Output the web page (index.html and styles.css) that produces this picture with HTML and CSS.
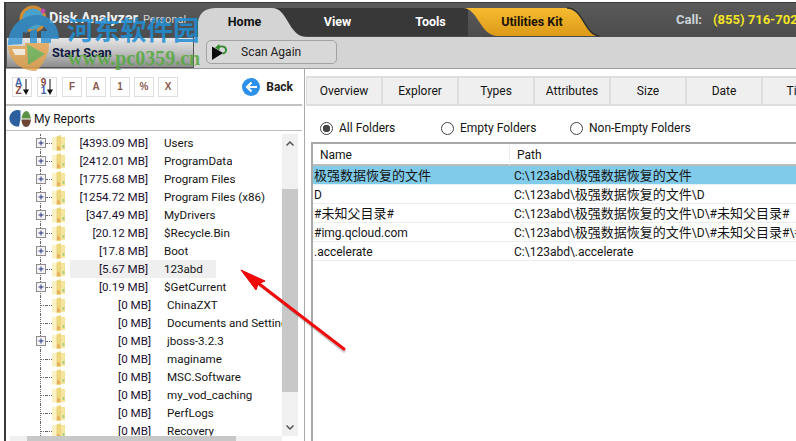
FILE: index.html
```html
<!DOCTYPE html>
<html lang="zh-CN">
<head>
<meta charset="utf-8">
<title>Disk Analyzer</title>
<link rel="stylesheet" href="styles.css">
</head>
<body>
<svg class="defs" width="0" height="0" aria-hidden="true">
  <defs>
    <linearGradient id="gold" x1="0" y1="0" x2="0" y2="1"><stop offset="0" stop-color="#f6bb30"/><stop offset="1" stop-color="#dc9a18"/></linearGradient>
    <symbol id="folder" viewBox="0 0 13 16" preserveAspectRatio="none">
      <path d="M0 2h13v13H0z" fill="#f3e08f"/>
      <path d="M0 2h5v13.500H0z" fill="#faf1c4"/>
      <path d="M4.500 1.500 9 0v16H4.500z" fill="#eed67c"/>
      <path d="M9 2.500h3.500V15H9z" fill="#f5e59e"/>
      <path d="M5 10.500l3 1.500v3H5z" fill="#e6b060"/>
      <path d="M10.500 10h2v3h-2z" fill="#b0cd82"/>
    </symbol>
    <symbol id="plus" viewBox="0 0 10 10">
      <rect x=".5" y=".5" width="9" height="9" fill="#f4f4f6" stroke="#8d8d8d"/>
      <path d="M2.500 5h5M5 2.500v5" stroke="#26337c" stroke-width="1"/>
    </symbol>
  </defs>
</svg>

<div class="window">
  <header class="titlebar">
    <div class="brand"><span class="brand-name">Disk Analyzer</span><span class="brand-edition">Personal</span></div>
    <nav class="tabs">
      <svg class="tabs-bg" width="402" height="34" viewBox="0 0 402 34" aria-hidden="true">
        <path d="M70 5H270V33H70z" fill="#383838"/>
        <path d="M265 5h104c16 0 18 27 32 28H300c-18 0-20-28-35-28z" fill="url(#gold)"/>
        <path d="M369 5c16 0 18 27 32 28" fill="none" stroke="#2e2e2e" stroke-width="1.500"/>
        <path d="M0 34V19Q2 5 18 5h56c16 0 16 28 34 29z" fill="#d4d4d4"/>
      </svg>
      <span class="tab tab-home">Home</span>
      <span class="tab">View</span>
      <span class="tab">Tools</span>
      <span class="tab tab-kit">Utilities Kit</span>
    </nav>
    <div class="call"><span class="call-label">Call:</span><span class="call-number">(855) 716-702</span></div>
  </header>

  <div class="toolbar">
    <button class="start-scan">Start Scan</button>
    <button class="scan-again">
      <svg width="15" height="16" viewBox="0 0 15 16" aria-hidden="true">
        <path d="M0 2.500 11 9 0 16z" fill="#0c0c0c"/>
        <path d="M6 3.500c3-2 8.500-1.500 8 3-.3 2.200-2 3-3.500 3" fill="none" stroke="#2f8a2c" stroke-width="1.800"/>
        <path d="M3 3.500 7.500 0v6.500z" fill="#2f8a2c"/>
      </svg>
      <span>Scan Again</span>
    </button>
  </div>

  <div class="main">
    <aside class="left">
      <div class="sortbar">
        <span class="sort-btn sort-icon"><span class="sort-stack"><b class="blue">A</b><b class="brown">Z</b></span><svg width="6" height="16" viewBox="0 0 6 16" aria-hidden="true"><path d="M3 0v14" stroke="#111"/><path d="M0 10.500h6L3 16z" fill="#111"/></svg></span>
        <span class="sort-btn sort-icon"><span class="sort-stack"><b class="brown">9</b><b class="blue">1</b></span><svg width="6" height="16" viewBox="0 0 6 16" aria-hidden="true"><path d="M3 0v14" stroke="#111"/><path d="M0 10.500h6L3 16z" fill="#111"/></svg></span>
        <span class="sort-btn">F</span>
        <span class="sort-btn">A</span>
        <span class="sort-btn">1</span>
        <span class="sort-btn">%</span>
        <span class="sort-btn">X</span>
        <span class="back">
          <svg width="18" height="18" viewBox="0 0 18 18" aria-hidden="true"><circle cx="9" cy="9" r="9" fill="#2d90ea"/><path d="M15 9H5M9.500 4.500 5 9l4.500 4.500" fill="none" stroke="#fff" stroke-width="2.200"/></svg>
          <b>Back</b>
        </span>
      </div>
      <div class="reports">
        <svg width="22" height="18" viewBox="0 0 22 18" aria-hidden="true">
          <path d="M11.500 .5A8.300 8.300 0 1 0 10 16.500L11.500 9z" fill="#2c5f9e"/>
          <path d="M12.500 8.500C13 4 15 1.500 17 1s4.300 3 4.800 7.500z" fill="#5d9147"/>
          <path d="M12.500 9.500h9.300c0 4-2 7.500-4.700 7.500s-4.600-3.500-4.600-7.500z" fill="#6d4534"/>
        </svg>
        <span>My Reports</span>
      </div>
      <div class="tree-wrap">
        <div class="tree">
          <div class="row"><svg class="plus"><use href="#plus"/></svg><span class="dots"></span><svg class="folder"><use href="#folder"/></svg><span class="size">[4393.09 MB]</span><span class="label">Users</span></div>
          <div class="row"><svg class="plus"><use href="#plus"/></svg><span class="dots"></span><svg class="folder"><use href="#folder"/></svg><span class="size">[2412.01 MB]</span><span class="label">ProgramData</span></div>
          <div class="row"><svg class="plus"><use href="#plus"/></svg><span class="dots"></span><svg class="folder"><use href="#folder"/></svg><span class="size">[1775.68 MB]</span><span class="label">Program Files</span></div>
          <div class="row"><svg class="plus"><use href="#plus"/></svg><span class="dots"></span><svg class="folder"><use href="#folder"/></svg><span class="size">[1254.72 MB]</span><span class="label">Program Files (x86)</span></div>
          <div class="row"><svg class="plus"><use href="#plus"/></svg><span class="dots"></span><svg class="folder"><use href="#folder"/></svg><span class="size">[347.49 MB]</span><span class="label">MyDrivers</span></div>
          <div class="row"><svg class="plus"><use href="#plus"/></svg><span class="dots"></span><svg class="folder"><use href="#folder"/></svg><span class="size">[20.12 MB]</span><span class="label">$Recycle.Bin</span></div>
          <div class="row"><svg class="plus"><use href="#plus"/></svg><span class="dots"></span><svg class="folder"><use href="#folder"/></svg><span class="size">[17.8 MB]</span><span class="label">Boot</span></div>
          <div class="row row-active"><svg class="plus"><use href="#plus"/></svg><span class="dots"></span><svg class="folder"><use href="#folder"/></svg><span class="size">[5.67 MB]</span><span class="label">123abd</span></div>
          <div class="row"><svg class="plus"><use href="#plus"/></svg><span class="dots"></span><svg class="folder"><use href="#folder"/></svg><span class="size">[0.19 MB]</span><span class="label">$GetCurrent</span></div>
          <div class="row row-zero"><span class="noplus"></span><span class="dots"></span><svg class="folder"><use href="#folder"/></svg><span class="size">[0 MB]</span><span class="label">ChinaZXT</span></div>
          <div class="row row-zero"><span class="noplus"></span><span class="dots"></span><svg class="folder"><use href="#folder"/></svg><span class="size">[0 MB]</span><span class="label">Documents and Settings</span></div>
          <div class="row row-zero"><svg class="plus"><use href="#plus"/></svg><span class="dots"></span><svg class="folder"><use href="#folder"/></svg><span class="size">[0 MB]</span><span class="label">jboss-3.2.3</span></div>
          <div class="row row-zero"><span class="noplus"></span><span class="dots"></span><svg class="folder"><use href="#folder"/></svg><span class="size">[0 MB]</span><span class="label">maginame</span></div>
          <div class="row row-zero"><span class="noplus"></span><span class="dots"></span><svg class="folder"><use href="#folder"/></svg><span class="size">[0 MB]</span><span class="label">MSC.Software</span></div>
          <div class="row row-zero"><span class="noplus"></span><span class="dots"></span><svg class="folder"><use href="#folder"/></svg><span class="size">[0 MB]</span><span class="label">my_vod_caching</span></div>
          <div class="row row-zero"><span class="noplus"></span><span class="dots"></span><svg class="folder"><use href="#folder"/></svg><span class="size">[0 MB]</span><span class="label">PerfLogs</span></div>
          <div class="row row-zero"><span class="noplus"></span><span class="dots"></span><svg class="folder"><use href="#folder"/></svg><span class="size">[0 MB]</span><span class="label">Recovery</span></div>
        </div>
        <div class="vscroll">
          <svg class="chev" width="8" height="5" viewBox="0 0 8 5" aria-hidden="true"><path d="M.5 4.500 4 1l3.500 3.500" fill="none" stroke="#555" stroke-width="1.500"/></svg>
          <div class="vthumb"></div>
          <svg class="chev" width="8" height="5" viewBox="0 0 8 5" aria-hidden="true"><path d="M.5.5 4 4 7.500.5" fill="none" stroke="#555" stroke-width="1.500"/></svg>
        </div>
      </div>
      <div class="hscroll"><div class="hthumb"></div></div>
    </aside>

    <section class="right">
      <div class="rtabs">
        <span class="rtab">Overview</span>
        <span class="rtab">Explorer</span>
        <span class="rtab">Types</span>
        <span class="rtab">Attributes</span>
        <span class="rtab">Size</span>
        <span class="rtab">Date</span>
        <span class="rtab">Time</span>
      </div>
      <div class="radios">
        <span class="radio radio-all"><i class="dot dot-on"></i>All Folders</span>
        <span class="radio radio-empty"><i class="dot"></i>Empty Folders</span>
        <span class="radio"><i class="dot"></i>Non-Empty Folders</span>
      </div>
      <div class="table">
        <div class="thead"><span class="th-name">Name</span><span class="th-path">Path</span></div>
        <div class="tr tr-on"><span class="td-name"><span class="cjk">极强数据恢复的文件</span></span><span class="td-path">C:\123abd\<span class="cjk">极强数据恢复的文件</span></span></div>
        <div class="tr"><span class="td-name">D</span><span class="td-path">C:\123abd\<span class="cjk">极强数据恢复的文件</span>\D</span></div>
        <div class="tr"><span class="td-name">#<span class="cjk">未知父目录</span>#</span><span class="td-path">C:\123abd\<span class="cjk">极强数据恢复的文件</span>\D\#<span class="cjk">未知父目录</span>#</span></div>
        <div class="tr"><span class="td-name">#img.qcloud.com</span><span class="td-path">C:\123abd\<span class="cjk">极强数据恢复的文件</span>\D\#<span class="cjk">未知父目录</span>#\#img.qcloud.com</span></div>
        <div class="tr"><span class="td-name">.accelerate</span><span class="td-path">C:\123abd\.accelerate</span></div>
      </div>
    </section>
  </div>
</div>

<div class="watermark">
  <svg class="wm-logo" width="70" height="72" viewBox="0 0 70 72" aria-hidden="true">
    <circle cx="30" cy="18" r="12" fill="#48b4e6" stroke="#ef9a2d" stroke-width="3"/>
    <circle cx="40" cy="10" r="2.500" fill="#d34fc0"/>
    <path d="M5 44C5 24 20 14 34 14c13 0 22 10 22 24h-10C46 28 40 23 32 24c-4 1-7 3-8 8l-4-1-1 12z" fill="#2f93d6"/>
    <path d="M27 30l7-2v14H27zM38 30h10v12H38z" fill="#2f93d6"/>
    <path d="M5 45h17v-3l24 0c0 10-4 20-13 28C18 70 6 60 5 45z" fill="#e6a44c"/>
    <path d="M24 43l18 10-17 11z" fill="#6db24d"/>
    <path d="M9 48h13v6H12z" fill="#fff" opacity=".85"/>
  </svg>
  <span class="wm-cn">河东软件园</span>
  <span class="wm-url">www.pc0359.cn</span>
</div>

<svg class="arrow" width="796" height="441" viewBox="0 0 796 441" aria-hidden="true">
  <path d="M345 352 260 285" stroke="#000" stroke-width="3" opacity=".2"/>
  <path d="M344 349 258 283" stroke="#f00a0a" stroke-width="3" stroke-linecap="round"/>
  <path d="M241 270 265 281 258 284 256 290z" fill="#f00a0a" stroke="#e30000" stroke-width="1" stroke-linejoin="round"/>
</svg>
</body>
</html>
```

FILE: styles.css
```css
* { box-sizing: border-box; }
html, body { margin: 0; padding: 0; }
body {
  width: 796px;
  height: 441px;
  overflow: hidden;
  background: #fff;
  position: relative;
  font-family: Roboto, "Noto Sans CJK SC", sans-serif;
  font-size: 12px;
  color: #141414;
}
.defs { position: absolute; }
.cjk { font-size: 13px; line-height: 1; }

.window {
  margin: 2px 0 0 4px;
  height: 439px;
  border-left: 2px solid #3a3a3a;
  border-top: 1px solid #3a3a3a;
  display: flex;
  flex-direction: column;
  background: #fff;
}

.titlebar {
  flex: none;
  height: 34px;
  background: linear-gradient(#5a5a5a, #4c4c4c);
  display: flex;
  color: #fff;
  white-space: nowrap;
}
.brand {
  flex: none;
  width: 192px;
  padding: 7px 0 0 43px;
  display: flex;
  align-items: baseline;
  gap: 5px;
}
.brand-name { font-weight: 700; font-size: 14.500px; color: #eef2f4; }
.brand-edition { font-size: 11px; color: #d6d6d6; }
.tabs { position: relative; flex: none; display: flex; width: 478px; height: 34px; isolation: isolate; }
.tabs-bg { position: absolute; left: 0; top: 0; z-index: -1; }
.tab {
  flex: none;
  width: 93px;
  text-align: center;
  font-weight: 700;
  font-size: 12.500px;
  line-height: 37px;
}
.tab-home { color: #111; }
.tab-kit { width: 110px; color: #1b1200; }
.call { flex: none; font-weight: 700; font-size: 13px; line-height: 33px; display: flex; gap: 11px; }
.call-label { color: #ccd3d8; }
.call-number { color: #f4e524; }

.toolbar {
  flex: none;
  height: 32px;
  background: #d4d4d4;
  border-bottom: 1px solid #9c9c9c;
  display: flex;
  align-items: flex-start;
}
.start-scan {
  flex: none;
  width: 188px;
  height: 31px;
  margin: 0 12px 0 0;
  border: 1px solid #555;
  background: linear-gradient(#e6e6e6, #c4c4c4 45%, #8d8d8d);
  font: 700 12.700px Roboto, sans-serif;
  color: #0e1840;
  text-align: left;
  padding: 0 0 0 45px;
}
.scan-again {
  flex: none;
  width: 131px;
  height: 24px;
  margin: 3px 0 0 0;
  border: 1px solid #a2a2a2;
  border-radius: 5px;
  background: #d8d8d8;
  display: flex;
  align-items: center;
  padding: 0 0 0 5px;
  gap: 14px;
  font: 12px Roboto, sans-serif;
  color: #222;
}

.main { flex: 1; min-height: 0; display: flex; }

.left {
  flex: none;
  width: 299px;
  border-right: 1px solid #a9a9a9;
  display: flex;
  flex-direction: column;
}
.sortbar {
  flex: none;
  height: 37px;
  width: 296px;
  padding: 8px 0 0 6px;
  border-bottom: 2px solid #c2c2c2;
  display: flex;
  align-items: flex-start;
  gap: 4px;
}
.sort-btn {
  flex: none;
  width: 20px;
  height: 20px;
  border: 1px solid #dedede;
  color: #8b5a50;
  font: 700 10px/18px "Liberation Sans", sans-serif;
  text-align: center;
}
.sort-btn:nth-child(2), .sort-btn:nth-child(1) { margin-right: 1px; }
.sort-icon { display: flex; justify-content: center; align-items: center; gap: 1px; }
.sort-stack { display: flex; flex-direction: column; font-size: 10px; line-height: 8.500px; }
.blue { color: #3f62a8; }
.brown { color: #84463e; }
.back { margin-left: auto; margin-right: 9px; margin-top: 1px; display: flex; align-items: center; gap: 6px; font-size: 12px; color: #1d1d1d; }
.reports {
  flex: none;
  height: 25px;
  width: 296px;
  border-bottom: 1px solid #bdbdbd;
  padding: 1px 0 0 3px;
  display: flex;
  align-items: center;
  gap: 3px;
  font-size: 12px;
}

.tree-wrap { flex: 1; min-height: 0; display: flex; padding-top: 3px; }
.tree { width: 276px; overflow: hidden; position: relative; z-index: 0; }
.row {
  height: 18px;
  position: relative;
  display: flex;
  align-items: center;
  white-space: nowrap;
  padding-left: 30px;
  font-size: 11.600px;
}
.row::before {
  content: "";
  position: absolute;
  left: 34px;
  top: 0;
  bottom: 0;
  border-left: 1px dotted #666;
}
.plus { width: 10px; height: 10px; flex: none; position: relative; z-index: 1; }
.dots { width: 6px; flex: none; border-top: 1px dotted #666; }
.noplus { flex: none; width: 5px; margin-left: 5px; border-top: 1px dotted #666; }
.folder { width: 13px; height: 16px; flex: none; }
.size { width: 83px; flex: none; text-align: right; color: #1c1030; }
.label { margin-left: 16px; overflow: hidden; }
.row-zero .size { width: 86px; }
.row-active::after {
  content: "";
  position: absolute;
  left: 64px;
  width: 146px;
  top: 0;
  bottom: 0;
  background: #efefef;
  z-index: -1;
}

.vscroll {
  flex: none;
  width: 16px;
  background: #f0f0f0;
  display: flex;
  flex-direction: column;
  align-items: center;
  padding: 7px 0 6px;
}
.vthumb { flex: none; width: 16px; height: 203px; margin: 43px 0 auto; background: #c8c8c8; }
.chev { flex: none; }
.hscroll { flex: none; height: 5px; margin-left: 4px; width: 272px; background: #f0f0f0; padding-left: 17px; }
.hthumb { width: 209px; height: 5px; background: #c8c8c8; }

.right { flex: 1; min-width: 0; overflow: hidden; display: flex; flex-direction: column; }
.rtabs {
  flex: none;
  display: flex;
  margin: 7px 0 0 1px;
  height: 30px;
  background: #efefef;
  border-top: 2px solid #dedede;
  border-bottom: 2px solid #dedede;
  border-left: 1px solid #dedede;
}
.rtab {
  flex: none;
  width: 76px;
  border-right: 2px solid #dedede;
  text-align: center;
  line-height: 27px;
}
.radios {
  flex: none;
  height: 36px;
  display: flex;
  align-items: center;
  padding: 8px 0 0 15px;
  white-space: nowrap;
}
.radio { flex: none; display: flex; align-items: center; gap: 6px; }
.radio-all { width: 121px; }
.radio-empty { width: 129px; }
.dot {
  width: 13px;
  height: 13px;
  border: 1px solid #444;
  border-radius: 50%;
  background: #fff;
  display: block;
}
.dot-on { background: radial-gradient(circle, #444 3.500px, #fff 4px); }
.table {
  flex: 1;
  margin-left: 6px;
  border-top: 2px solid #a9a9a9;
  border-left: 2px solid #a9a9a9;
  white-space: nowrap;
}
.thead {
  height: 22px;
  display: flex;
  align-items: center;
  padding-top: 1px;
  border-bottom: 2px solid #bcbcbc;
}
.th-name { flex: none; width: 197px; padding-left: 7px; border-right: 1px solid #ededed; line-height: 20px; }
.th-path { padding-left: 7px; }
.tr {
  height: 19px;
  display: flex;
  border-bottom: 1px solid #ededed;
  line-height: 20px;
}
.tr-on { background: #80cbe9; border-bottom-color: #e4f2f8; }
.td-name { flex: none; width: 201px; height: 18px; padding-left: 1px; }
.td-path { flex: none; height: 18px; }

.watermark {
  position: absolute;
  left: 0;
  top: 0;
  width: 210px;
  height: 75px;
  pointer-events: none;
}
.wm-logo { position: absolute; left: 3px; top: 1px; opacity: .8; }
.wm-cn {
  position: absolute;
  left: 67px;
  top: 11px;
  font: 700 26.500px/36px "Noto Sans CJK SC", sans-serif;
  color: #1f8fd6;
  opacity: .85;
  white-space: nowrap;
}
.wm-url {
  position: absolute;
  left: 68px;
  top: 47px;
  font: 700 20px/22px "Liberation Serif", serif;
  color: #55a93f;
  opacity: .85;
  white-space: nowrap;
}
.arrow { position: absolute; left: 0; top: 0; pointer-events: none; }
```
